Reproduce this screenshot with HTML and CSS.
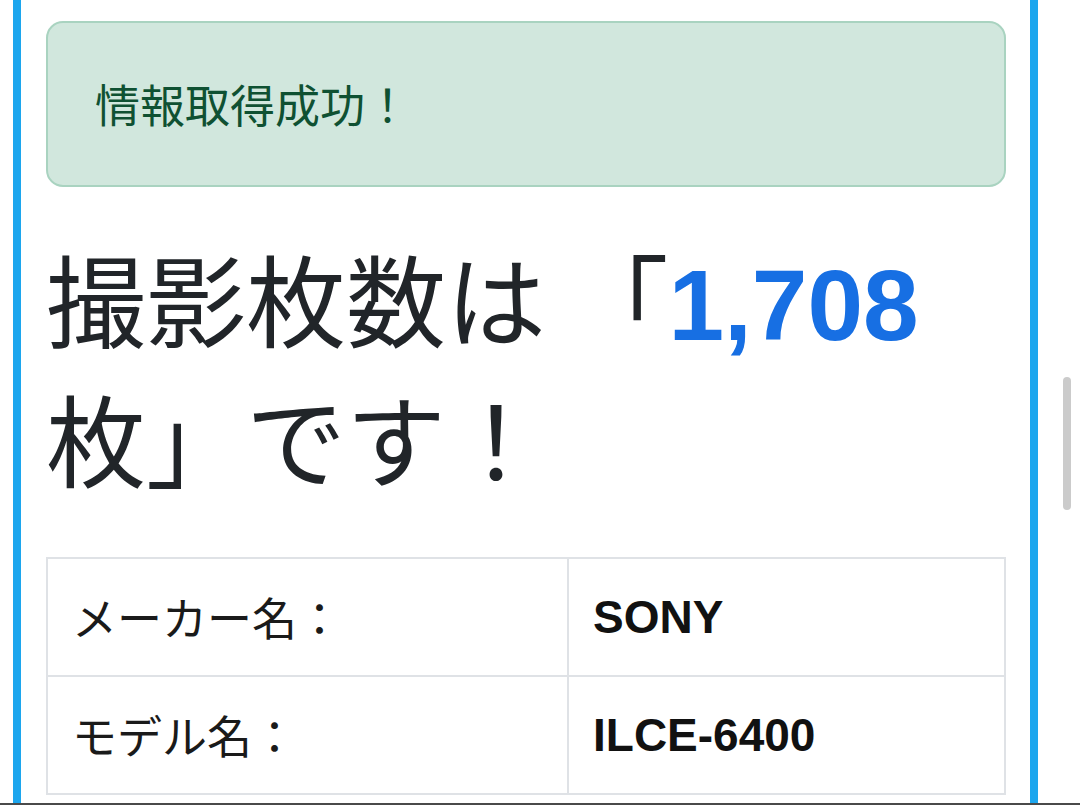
FILE: index.html
```html
<!DOCTYPE html>
<html lang="ja">
<head>
<meta charset="utf-8">
<title>撮影枚数</title>
<link rel="stylesheet" href="styles.css">
</head>
<body>
<div class="frame">
  <div class="alert">情報取得成功！</div>
  <h1 class="title">撮影枚数は 「<span class="count">1,708</span>枚」です！</h1>
  <table class="info">
    <tr><td class="label">メーカー名：</td><td class="value">SONY</td></tr>
    <tr><td class="label">モデル名：</td><td class="value">ILCE-6400</td></tr>
  </table>
</div>
<div class="scrollbar"></div>
<div class="bottom-edge"></div>
</body>
</html>
```
FILE: styles.css
```css
html, body {
  margin: 0;
  padding: 0;
  background: #ffffff;
  height: 100%;
  overflow: hidden;
}
body {
  font-family: "Liberation Sans", "Noto Sans CJK JP", sans-serif;
  color: #212529;
  font-size: 45px;
}
.frame {
  margin-left: 13px;
  width: 960px;
  min-height: 805px;
  border-left: 8px solid #1ca6ee;
  border-right: 8px solid #1ca6ee;
  padding: 21px 24px 0 25px;
  box-sizing: content-box;
}
.alert {
  background: #d1e7dd;
  border: 2px solid #a9d3c0;
  border-radius: 17px;
  color: #0f5132;
  padding: 47px 47px;
  line-height: 68px;
  font-family: "Noto Sans CJK JP", sans-serif;
}
.title {
  margin: 44px 0 55px 0;
  font-size: 100px;
  line-height: 131px;
  font-weight: 400;
  font-family: "Noto Sans CJK JP", sans-serif;
  color: #212529;
}
.count {
  font-family: "Liberation Sans", sans-serif;
  font-weight: 700;
  color: #176fe3;
}
.info {
  width: 960px;
  border-collapse: collapse;
}
.info td {
  border: 2px solid #dfe2e6;
  padding: 24px 24px;
  line-height: 68px;
}
.label {
  width: 471px;
  font-family: "Noto Sans CJK JP", sans-serif;
  color: #1a1a1a;
}
.value {
  font-weight: 700;
  color: #111;
  font-size: 46px;
}
.scrollbar {
  position: fixed;
  left: 1063px;
  top: 377px;
  width: 8px;
  height: 133px;
  border-radius: 4px;
  background: #cbcbcb;
}
.bottom-edge {
  position: fixed;
  left: 0;
  right: 0;
  bottom: 0;
  height: 2px;
  background: #4a4a4a;
}
```
